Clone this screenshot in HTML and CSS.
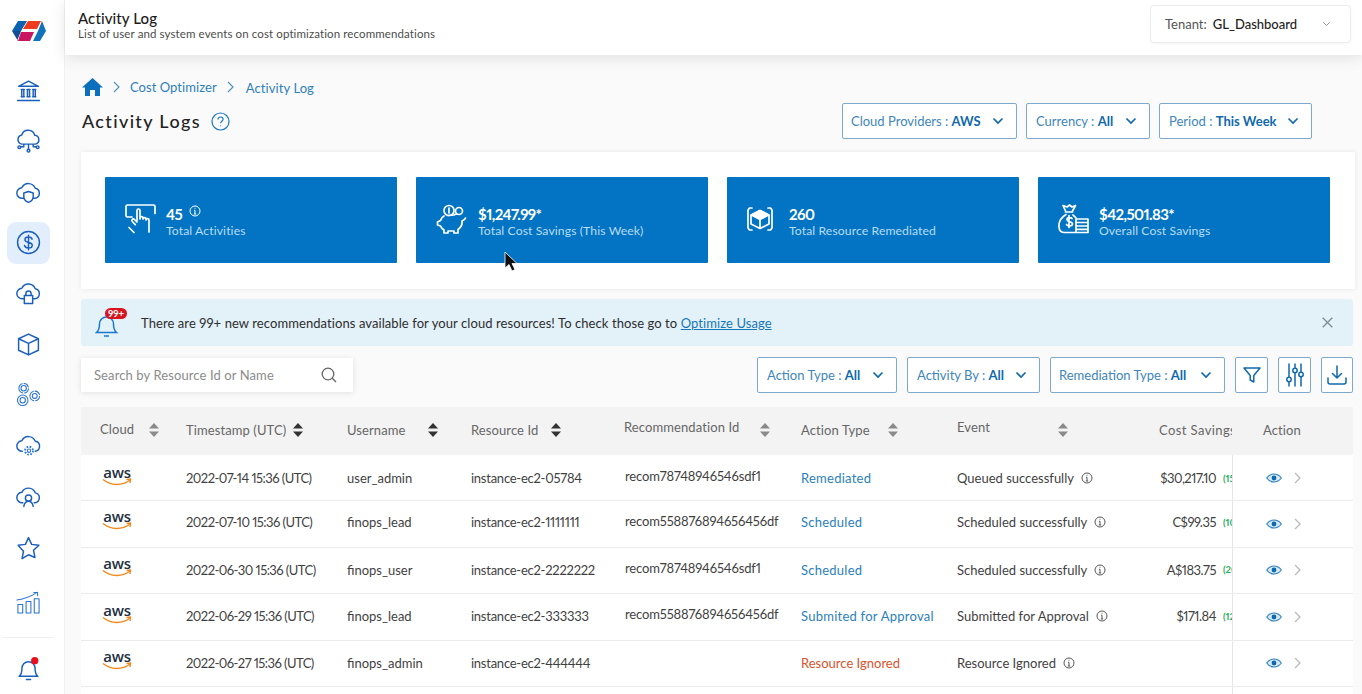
FILE: index.html
```html
<!DOCTYPE html>
<html lang="en">
<head>
<meta charset="utf-8">
<title>Activity Log</title>
<link rel="stylesheet" href="styles.css">
</head>
<body>
<svg class="defs" width="0" height="0" aria-hidden="true">
  <symbol id="down" viewBox="0 0 12 8"><path d="M1.500 1.500 6 6l4.500-4.500"/></symbol>
  <symbol id="sort" viewBox="0 0 10 14"><path d="M5 0 10 5.500H0zM5 14 0 8.500h10z"/></symbol>
  <symbol id="info" viewBox="0 0 12 12"><circle cx="6" cy="6" r="5"/><path d="M6 5.300V9M4.800 9h2.400M5 5.300h1M6 2.800v.9"/></symbol>
  <symbol id="eye" viewBox="0 0 16 10"><path class="eye-line" d="M.7 5C4.500-.3 11.500-.3 15.300 5 11.500 10.300 4.500 10.300.7 5z"/><circle class="eye-dot" cx="8" cy="5" r="2.400"/></symbol>
  <symbol id="next" viewBox="0 0 7 12"><path d="M1 1l5 5-5 5"/></symbol>
  <symbol id="aws" viewBox="0 0 30 10"><path d="M1 1.500C9 8 20 8 28 2"/><path d="M24.500 1.500 28.500 1 28 5"/></symbol>
</svg>

<div class="app">
  <nav class="rail">
    <svg class="logo" viewBox="0 0 34 22" width="34" height="22">
      <polygon points="0,11 6,1 15,1 9,11" fill="#0b62b0"/>
      <polygon points="0,11 9,11 5,21 6,21" fill="#0d4e95"/>
      <polygon points="16,1 29,1 25,9 11,9" fill="#ec3b1e"/>
      <polygon points="30,1 34,11 28,21 21,21 26,11" fill="#0f72bd"/>
      <polygon points="9,12 22,12 18,21 6,21" fill="#c8175f"/>
    </svg>
    <a class="rail-item"><svg class="ri" viewBox="0 0 24 24"><path d="M2.500 8 12 3l9.500 5zM5.500 11v7M7.500 11v7M11 11v7M13 11v7M16.500 11v7M18.500 11v7M5 11h3M10.500 11h3M16 11h3M5 18h3M10.500 18h3M16 18h3M1.500 21.500h21"/></svg></a>
    <a class="rail-item"><svg class="ri" viewBox="0 0 24 24"><path d="M5.500 14.500A4.500 4.500 0 0 1 5.500 5.700 6.500 6.500 0 0 1 18 6a4.300 4.300 0 0 1 .5 8.500zM12 14.500v5M7.500 14.500v2.500H4.500M16.500 14.500v2.500H19.500"/><circle cx="3.200" cy="17.500" r="1.300"/><circle cx="12" cy="20.800" r="1.300"/><circle cx="20.800" cy="17.500" r="1.300"/></svg></a>
    <a class="rail-item"><svg class="ri" viewBox="0 0 24 24"><path d="M7 17.500H6a5 5 0 0 1-.4-10A7 7 0 0 1 18.500 8a4.800 4.800 0 0 1-.5 9.500h-1M7.500 12.500 12 11l4.500 1.500V16c0 2.700-2 4.500-4.500 5.500-2.500-1-4.500-2.800-4.500-5.500z"/></svg></a>
    <a class="rail-item active"><svg class="ri" viewBox="0 0 24 24"><circle cx="12" cy="12" r="10.500"/><path d="M15.500 8.800C15 7.200 13.500 6.800 12 6.800c-1.800 0-3.400.9-3.400 2.600 0 3.600 7 1.600 7 5.200 0 1.800-1.700 2.700-3.600 2.700-1.700 0-3.300-.7-3.800-2.400M12 5v14"/></svg></a>
    <a class="rail-item"><svg class="ri" viewBox="0 0 24 24"><path d="M7 17H6a5 5 0 0 1-.4-10A7 7 0 0 1 18.500 7.500a4.800 4.800 0 0 1-.5 9.500h-1M8 14h8v7.500H8zM9.500 14v-2a2.500 2.500 0 0 1 5 0v2"/></svg></a>
    <a class="rail-item"><svg class="ri" viewBox="0 0 24 24"><path d="M12 2 21.500 6.500v11L12 22l-9.500-4.500v-11zM2.500 6.500 12 11l9.500-4.500M12 11v11"/></svg></a>
    <a class="rail-item"><svg class="ri thin" viewBox="0 0 26 26"><path class="dash2" d="M3 6.500a5 5 0 0 1 10 0 5 5 0 0 1-10 0z"/><circle cx="8" cy="6.500" r="2.800"/><circle cx="7" cy="19" r="5.500"/><circle cx="7" cy="19" r="2.800"/><path class="dash2" d="M14.500 14.500a5 5 0 0 1 10 0 5 5 0 0 1-10 0z"/><circle cx="19.500" cy="14.500" r="2.500"/></svg></a>
    <a class="rail-item"><svg class="ri" viewBox="0 0 24 24"><path d="M6 17.500A5 5 0 0 1 5.600 7.500 7 7 0 0 1 18.500 8 4.800 4.800 0 0 1 18.500 17.500"/><circle class="gear-in" cx="12.500" cy="17" r="1.600"/><circle class="dash" cx="12.500" cy="17" r="3.800"/></svg></a>
    <a class="rail-item"><svg class="ri" viewBox="0 0 24 24"><path d="M6.500 18H6a5 5 0 0 1-.4-10A7 7 0 0 1 18.500 8.500 4.800 4.800 0 0 1 18 18h-.5M7.500 21.500c.5-3 2.200-5 4.500-5s4 2 4.500 5"/><circle cx="12" cy="13.500" r="3"/></svg></a>
    <a class="rail-item"><svg class="ri" viewBox="0 0 24 24"><path d="M12 2.500 15 9l7 .8-5.200 4.800 1.400 7L12 19l-6.200 3.600 1.400-7L2 9.800 9 9z"/></svg></a>
    <a class="rail-item bars"><svg class="ri thin" viewBox="0 0 26 24"><path d="M2 14h5v9H2zM10.500 11h5v12h-5zM19 8h5v15h-5zM1 9.500C8 8.500 15 6 22 1.500M18.500 1.500H22.500V5"/></svg></a>
    <div class="rail-rule"></div>
    <a class="rail-item bell"><svg class="ri" viewBox="0 0 24 24"><path d="M3 19.500c2.500-2 2.700-4.500 2.700-7.500 0-3.500 2.500-6.500 6.300-6.500s6.300 3 6.300 6.500c0 3 .2 5.500 2.700 7.500zM10 22.500h4"/><circle class="red" cx="18" cy="4.500" r="3.500"/></svg></a>
  </nav>

  <div class="main">
    <header class="topbar">
      <div class="topbar-text">
        <div class="topbar-title">Activity Log</div>
        <div class="topbar-sub">List of user and system events on cost optimization recommendations</div>
      </div>
      <div class="tenant">
        <span class="tenant-label">Tenant:</span>
        <b>GL_Dashboard</b>
        <svg class="chev-grey" width="9" height="6"><use href="#down"/></svg>
      </div>
    </header>

    <div class="content">
      <div class="crumbs">
        <svg class="home" width="21" height="18" viewBox="0 0 21 18"><path d="M10.500 0 21 9.500h-3V18h-5v-6H8v6H3V9.500H0z"/></svg>
        <svg class="crumb-sep" width="7" height="12"><use href="#next"/></svg>
        <span class="crumb-a">Cost Optimizer</span>
        <svg class="crumb-sep" width="7" height="12"><use href="#next"/></svg>
        <span class="crumb-b">Activity Log</span>
      </div>

      <div class="title-row">
        <h1>Activity Logs</h1>
        <svg class="help" width="19" height="19" viewBox="0 0 19 19"><circle cx="9.500" cy="9.500" r="8.500"/><path d="M7 7.500c0-1.500 1.100-2.500 2.600-2.500s2.500 1 2.500 2.300c0 2-2.500 2-2.500 4M9.600 13.500v.8"/></svg>
        <div class="filters">
          <button class="fbtn w-cloud">Cloud Providers :&nbsp;<b>AWS</b><svg class="chev" width="12" height="8"><use href="#down"/></svg></button>
          <button class="fbtn w-cur">Currency :&nbsp;<b>All</b><svg class="chev" width="12" height="8"><use href="#down"/></svg></button>
          <button class="fbtn w-per">Period :&nbsp;<b>This Week</b><svg class="chev" width="12" height="8"><use href="#down"/></svg></button>
        </div>
      </div>

      <section class="panel">
        <div class="stat">
          <svg class="stat-ico" width="31" height="30" viewBox="0 0 31 30"><path d="M7 13H2.500C1.500 13 1 12.500 1 11.500v-9C1 1.500 1.500 1 2.500 1h26c1 0 1.500.5 1.500 1.500v7"/><path d="M12 17V6.500c0-2 3-2 3 0V15l0-1c0-1.800 3-1.800 3 0v1c0-1.800 3-1.800 3 0v1c0-1.800 3-1.800 3 0v12M12 18l-2.500-2.500c-1.500-1.500-3.500.5-2.200 2l3 3.200M4 23.500l5 5"/></svg>
          <div><div class="stat-n">45 <svg class="stat-i" width="12" height="12"><use href="#info"/></svg></div><div class="stat-l">Total Activities</div></div>
        </div>
        <div class="stat">
          <svg class="stat-ico" width="31" height="30" viewBox="0 0 31 30"><circle cx="13" cy="6.500" r="5"/><path d="M13 4v5M8 12c-2 1-3 3-3.500 4.500L1.500 18v3l3 1c.5 1.500 2 3 3.500 4v3h4v-2h6v2h4v-3.500c3-2 4.500-5 4-8.500 1.500-.5 3-1 3.500-3M21 10a5 5 0 0 0-3 1c-2 0-4 .1-6 .5"/><circle cx="23" cy="7" r="3.500"/></svg>
          <div class="stat-gap"><div class="stat-n">$1,247.99*</div><div class="stat-l">Total Cost Savings (This Week)</div></div>
        </div>
        <div class="stat">
          <svg class="stat-ico small" width="26" height="24" viewBox="0 0 26 24"><path class="solid" d="M13 3.500 21.500 8 13 12.500 4.500 8z"/><path d="M13 3.500 22 8v9l-9 4.500L4 17V8zM13 12.500V21.500"/><path d="M5 1H2.500L1 3v18l1.500 2H5M21 1h2.500L25 3v18l-1.500 2H21"/></svg>
          <div class="stat-gap2"><div class="stat-n">260</div><div class="stat-l">Total Resource Remediated</div></div>
        </div>
        <div class="stat">
          <svg class="stat-ico" width="31" height="30" viewBox="0 0 31 30"><path d="M8 8 5 1.500 9 3l2.500-2L14 3l3.500-1.500L14 8zM7.500 8h7M8 10.500C3 13.500.5 18 1 23c.2 3 2 5.500 5.500 5.500H17M15 11c1 .8 2 1.800 3 3"/><path d="M14 14.500c-1-1.300-5-1.300-5 1 0 3 5.500 1.500 5.500 4.500 0 2.400-5.200 2.300-6 .5M11 11.500v12M18 15h12v3.500H18zM18 18.500h12V22H18zM18 22h12v3.300H18zM18 25.300h12v3.200H18z"/></svg>
          <div><div class="stat-n">$42,501.83*</div><div class="stat-l">Overall Cost Savings</div></div>
        </div>
      </section>

      <div class="banner">
        <div class="banner-bell">
          <svg width="24" height="26" viewBox="0 0 24 26"><path d="M1.500 20.500c2.500-2 3-5 3-8.500 0-4 3-7 7-7s7 3 7 7c0 3.500.5 6.500 3 8.500zM9 24h5"/></svg>
          <span class="badge">99+</span>
        </div>
        <p>There are 99+ new recommendations available for your cloud resources! To check those go to <a>Optimize Usage</a></p>
        <svg class="close" width="11" height="11" viewBox="0 0 11 11"><path d="M.7.7l9.600 9.600M10.300.7.700 10.300"/></svg>
      </div>

      <div class="tools">
        <div class="search">
          <span>Search by Resource Id or Name</span>
          <svg width="16" height="16" viewBox="0 0 16 16"><circle cx="7" cy="7" r="5.800"/><path d="M11.300 11.300 15 15"/></svg>
        </div>
        <div class="tools-right">
          <button class="fbtn w-act">Action Type :&nbsp;<b>All</b><svg class="chev" width="12" height="8"><use href="#down"/></svg></button>
          <button class="fbtn w-by">Activity By :&nbsp;<b>All</b><svg class="chev" width="12" height="8"><use href="#down"/></svg></button>
          <button class="fbtn w-rem">Remediation Type :&nbsp;<b>All</b><svg class="chev" width="12" height="8"><use href="#down"/></svg></button>
          <button class="ibtn"><svg width="18" height="18" viewBox="0 0 18 18"><path d="M1 2h16l-6.200 7.500V16l-3.600-2V9.500z"/></svg></button>
          <button class="ibtn"><svg width="18" height="24" viewBox="0 0 18 24"><path d="M3 1v13M3 19v4M9 1v4M9 10v13M15 1v8M15 14v9"/><circle cx="3" cy="16.500" r="2.200"/><circle cx="9" cy="7.500" r="2.200"/><circle cx="15" cy="11.500" r="2.200"/></svg></button>
          <button class="ibtn last"><svg width="20" height="20" viewBox="0 0 20 20"><path d="M10 1v12M5.500 8.500 10 13l4.500-4.500M1 13v4c0 1 .7 2 2 2h14c1.300 0 2-1 2-2v-4"/></svg></button>
        </div>
      </div>

      <section class="table">
        <div class="row head">
          <div class="th"><span class="up1">Cloud</span><svg class="sort s1" width="10" height="14"><use href="#sort"/></svg></div>
          <div class="th"><span>Timestamp (UTC)</span><svg class="sort dark s2" width="10" height="14"><use href="#sort"/></svg></div>
          <div class="th"><span>Username</span><svg class="sort dark s3" width="10" height="14"><use href="#sort"/></svg></div>
          <div class="th"><span>Resource Id</span><svg class="sort dark s4" width="10" height="14"><use href="#sort"/></svg></div>
          <div class="th"><span class="up2">Recommendation Id</span><svg class="sort s5" width="10" height="14"><use href="#sort"/></svg></div>
          <div class="th"><span>Action Type</span><svg class="sort s6" width="10" height="14"><use href="#sort"/></svg></div>
          <div class="th"><span class="up2">Event</span><svg class="sort s7" width="10" height="14"><use href="#sort"/></svg></div>
          <div class="th clip"><span>Cost Savings</span></div>
          <div class="th act"><span>Action</span></div>
        </div>

        <div class="row r-low">
          <div class="td"><div class="aws"><span>aws</span><svg width="30" height="10"><use href="#aws"/></svg></div></div>
          <div class="td date">2022-07-14 15:36 (UTC)</div>
          <div class="td">user_admin</div>
          <div class="td res">instance-ec2-05784</div>
          <div class="td rec up">recom78748946546sdf1</div>
          <div class="td link">Remediated</div>
          <div class="td">Queued successfully<svg class="i" width="12" height="12"><use href="#info"/></svg></div>
          <div class="td cost"><span>$30,217.10</span><b>(15%)</b></div>
          <div class="td act"><svg class="e" width="16" height="10"><use href="#eye"/></svg><svg class="n" width="7" height="12"><use href="#next"/></svg></div>
        </div>
        <div class="row r-high">
          <div class="td"><div class="aws"><span>aws</span><svg width="30" height="10"><use href="#aws"/></svg></div></div>
          <div class="td date">2022-07-10 15:36 (UTC)</div>
          <div class="td">finops_lead</div>
          <div class="td res">instance-ec2-1111111</div>
          <div class="td rec up">recom558876894656456df</div>
          <div class="td link">Scheduled</div>
          <div class="td">Scheduled successfully<svg class="i" width="12" height="12"><use href="#info"/></svg></div>
          <div class="td cost"><span>C$99.35</span><b>(10%)</b></div>
          <div class="td act"><svg class="e" width="16" height="10"><use href="#eye"/></svg><svg class="n" width="7" height="12"><use href="#next"/></svg></div>
        </div>
        <div class="row">
          <div class="td"><div class="aws"><span>aws</span><svg width="30" height="10"><use href="#aws"/></svg></div></div>
          <div class="td date">2022-06-30 15:36 (UTC)</div>
          <div class="td">finops_user</div>
          <div class="td res">instance-ec2-2222222</div>
          <div class="td rec up">recom78748946546sdf1</div>
          <div class="td link">Scheduled</div>
          <div class="td">Scheduled successfully<svg class="i" width="12" height="12"><use href="#info"/></svg></div>
          <div class="td cost"><span>A$183.75</span><b>(20%)</b></div>
          <div class="td act"><svg class="e" width="16" height="10"><use href="#eye"/></svg><svg class="n" width="7" height="12"><use href="#next"/></svg></div>
        </div>
        <div class="row">
          <div class="td"><div class="aws"><span>aws</span><svg width="30" height="10"><use href="#aws"/></svg></div></div>
          <div class="td date">2022-06-29 15:36 (UTC)</div>
          <div class="td">finops_lead</div>
          <div class="td res">instance-ec2-333333</div>
          <div class="td rec up">recom558876894656456df</div>
          <div class="td link">Submited for Approval</div>
          <div class="td">Submitted for Approval<svg class="i" width="12" height="12"><use href="#info"/></svg></div>
          <div class="td cost"><span>$171.84</span><b>(12%)</b></div>
          <div class="td act"><svg class="e" width="16" height="10"><use href="#eye"/></svg><svg class="n" width="7" height="12"><use href="#next"/></svg></div>
        </div>
        <div class="row">
          <div class="td"><div class="aws"><span>aws</span><svg width="30" height="10"><use href="#aws"/></svg></div></div>
          <div class="td date">2022-06-27 15:36 (UTC)</div>
          <div class="td">finops_admin</div>
          <div class="td res">instance-ec2-444444</div>
          <div class="td up"></div>
          <div class="td ignored">Resource Ignored</div>
          <div class="td">Resource Ignored<svg class="i" width="12" height="12"><use href="#info"/></svg></div>
          <div class="td cost"></div>
          <div class="td act"><svg class="e" width="16" height="10"><use href="#eye"/></svg><svg class="n" width="7" height="12"><use href="#next"/></svg></div>
        </div>
        <div class="row">
          <div class="td"></div><div class="td"></div><div class="td"></div><div class="td"></div><div class="td"></div><div class="td"></div><div class="td"></div><div class="td"></div><div class="td act"></div>
        </div>
      </section>
    </div>
  </div>
</div>

<svg class="cursor" width="14" height="22" viewBox="0 0 14 22"><path d="M1 1v16l4-3.500L8 20l3-1.500-3-6h5z"/></svg>
</body>
</html>
```
FILE: styles.css
```css
* { box-sizing: border-box; }
html, body { margin: 0; height: 100%; overflow: hidden; }
body { font-family: "Lato", "Open Sans", sans-serif; background: #fafafa; color: #3d3d3d; font-size: 13px; letter-spacing: .1px; font-variant-numeric: proportional-nums; }
.defs { position: absolute; }
.app { display: flex; height: 694px; overflow: hidden; }

/* rail */
.rail { width: 65px; flex: none; background: #fff; display: flex; flex-direction: column; align-items: center; padding: 20px 8px 0 0; border-right: 1px solid #f1f1f1; }
.logo { flex: none; margin: 0 0 0 1px; display: block; }
.rail-item { width: 43px; height: 50.700px; flex: none; display: flex; align-items: center; justify-content: center; margin-left: 1px; position: relative; }
.logo + .rail-item { margin-top: 23.500px; }
.rail-item.active::before { content: ""; position: absolute; left: 0; right: 0; top: 4px; bottom: 4px; background: #e3eefc; border-radius: 9px; }
.rail-item.bars { margin-top: 5px; }
.ri { width: 25px; height: 25px; fill: none; stroke: #1a5fbb; stroke-width: 1.400; stroke-linejoin: round; stroke-linecap: round; position: relative; }
.ri.thin { stroke-width: 1.100; stroke: #2a73d2; }
.dash { stroke-dasharray: 1.600 1.400; stroke-width: 1.800; stroke-linecap: butt; stroke: #2a73d2; }
.dash2 { stroke-dasharray: 6 2; }
.gear-in { stroke: #2a73d2; stroke-width: 1; }
.red { fill: #e8101c; stroke: none; }
.rail-rule { width: 50px; height: 1px; background: #eeeeee; margin-top: 9px; flex: none; }
.rail-item.bell { height: 60px; }

/* top bar */
.main { flex: 1; min-width: 0; display: flex; flex-direction: column; }
.topbar { height: 55px; flex: none; background: #fff; box-shadow: 0 3px 14px rgba(0,0,0,.1); display: flex; align-items: center; justify-content: space-between; padding: 0 11px 0 13px; position: relative; }
.topbar-title { font-size: 15px; font-weight: 500; color: #1d1d1d; line-height: 18px; margin-top: -7px; }
.topbar-sub { font-size: 11.500px; color: #4c4c4c; line-height: 13px; letter-spacing: .11px; }
.tenant { width: 201px; height: 38px; border: 1px solid #ececec; border-radius: 4px; background: #fff; display: flex; align-items: center; padding: 0 19px 0 14px; font-size: 13px; margin-top: -7px; box-shadow: 0 1px 3px rgba(0,0,0,.04); letter-spacing: 0; }
.tenant-label { color: #555; margin-right: 6px; }
.tenant b { font-weight: 500; color: #222; }
.chev-grey { margin-left: auto; fill: none; stroke: #999; stroke-width: 1.300; }

/* content */
.content { padding: 22px 9px 0 16px; flex: 1; min-height: 0; }
.crumbs { display: flex; align-items: center; height: 20px; margin-left: 1px; font-size: 13px; color: #2f7fbb; letter-spacing: .05px; }
.home { fill: #0b6fbe; }
.crumb-sep { fill: none; stroke: #4d8fc2; stroke-width: 1.100; margin: 0 10px; }
.crumb-b { margin: 1px 0 0 2px; letter-spacing: .1px; }
.title-row { display: flex; align-items: center; margin-top: 6px; height: 36px; }
h1 { margin: 0 0 0 1px; font-size: 18px; font-weight: 500; color: #222; letter-spacing: 1.350px; }
.help { fill: none; stroke: #1b78bd; stroke-width: 1.200; margin-left: 10px; }
.filters { margin-left: auto; margin-right: 41px; display: flex; gap: 9px; }
.fbtn { height: 36px; background: #fff; border: 1px solid #7ea9cf; border-radius: 2px; color: #4086bb; font: inherit; letter-spacing: 0; display: flex; align-items: center; padding: 0 12px 0 9px; }
.fbtn b { color: #0f69ad; font-weight: 700; letter-spacing: 0; }
.chev { margin-left: auto; fill: none; stroke: #0f69ad; stroke-width: 1.700; }
.w-cloud { width: 175px; padding-left: 8px; }
.w-cur { width: 124px; }
.w-per { width: 153px; }
.w-act { width: 140px; }
.w-by { width: 133px; }
.w-rem { width: 175px; padding-left: 8px; }

/* stats */
.panel { margin-top: 13px; margin-right: -2px; height: 137px; background: #fff; box-shadow: 0 0 5px rgba(0,0,0,.08); display: grid; grid-template-columns: repeat(4, 292px); gap: 19px; padding: 25px 24px 26px; }
.stat { background: #0274c3; border-radius: 1px; display: flex; align-items: center; padding: 0 0 0 20px; color: #fff; }
.stat > div { padding-top: 3px; }
.stat-ico { flex: none; fill: none; stroke: #fff; stroke-width: 1.700; stroke-linejoin: round; stroke-linecap: round; margin-right: 10px; margin-top: -2px; }
.stat-ico .solid { fill: #fff; }
.stat-ico.small { margin-right: 16px; }
.stat-gap { margin-left: 1px; }
.stat-n { font-size: 15px; font-weight: 700; line-height: 17px; letter-spacing: -.6px; display: flex; align-items: flex-start; gap: 7px; }
.stat-i { fill: none; stroke: #fff; stroke-width: 1; margin-top: -1px; }
.stat-l { font-size: 12.200px; color: #b9dcf3; line-height: 15px; letter-spacing: .1px; }

/* banner */
.banner { margin-top: 10px; height: 47px; background: #e3f1f9; border-radius: 3px; display: flex; align-items: center; padding: 0 20px 0 14px; }
.banner-bell { width: 46px; height: 30px; position: relative; flex: none; }
.banner-bell svg { fill: none; stroke: #1b78d0; stroke-width: 1.500; position: absolute; left: 0; top: 4px; }
.badge { position: absolute; left: 10px; top: 0; background: #d9141f; color: #fff; font-size: 9.500px; font-weight: 700; line-height: 11px; padding: 0 3px; border-radius: 6px; letter-spacing: 0; }
.banner p { margin: 0; color: #2d2d2d; font-size: 13px; letter-spacing: .08px; }
.banner a { color: #1678ba; text-decoration: underline; }
.close { margin-left: auto; fill: none; stroke: #7c8a93; stroke-width: 1.300; }

/* tools */
.tools { display: flex; align-items: center; justify-content: space-between; margin-top: 11px; height: 36px; }
.search { width: 272px; height: 34px; background: #fff; box-shadow: 0 1px 6px rgba(0,0,0,.1); display: flex; align-items: center; justify-content: space-between; padding: 0 16px 0 13px; color: #8b8b8b; }
.search svg { fill: none; stroke: #666; stroke-width: 1.300; }
.tools-right { display: flex; gap: 10px; }
.ibtn { width: 33px; height: 36px; background: #fff; border: 1px solid #7ea9cf; border-radius: 2px; display: flex; align-items: center; justify-content: center; padding: 0; }
.ibtn.last { width: 32px; }
.ibtn svg { fill: none; stroke: #0f69ad; stroke-width: 1.500; stroke-linejoin: round; stroke-linecap: round; }

/* table */
.table { margin-top: 14px; overflow: hidden; }
.row { display: grid; grid-template-columns: 105px 161px 124px 153px 177px 156px 183px 92px 120px; height: 46.400px; background: #fff; border-bottom: 1px solid #ebebeb; }
.row.head { height: 48px; background: #f3f3f3; border: 0; }
.th { display: flex; align-items: center; color: #666; white-space: nowrap; min-width: 0; padding-bottom: 2px; }
.th:first-child { padding-left: 19px; }
.up1 { margin-top: -2px; }
.up2 { margin-top: -6px; }
.sort { fill: #8a8a8a; flex: none; }
.sort.dark { fill: #333; }
.s1 { margin-left: 15px; }
.s2 { margin-left: 7px; }
.s3 { margin-left: 22px; }
.s4 { margin-left: 13px; }
.s5 { margin-left: 21px; }
.s6 { margin-left: 18px; }
.s7 { margin-left: 68px; }
.clip { padding-left: 19px; overflow: hidden; }
.th.clip span { overflow: hidden; letter-spacing: .4px; }
.th.act { padding-left: 31px; }
.td { display: flex; align-items: center; color: #3f3f3f; white-space: nowrap; min-width: 0; letter-spacing: 0; padding-bottom: 1px; }
.td.up { padding-bottom: 5px; }
.date { letter-spacing: -.55px; }
.res { letter-spacing: -.25px; }
.rec { letter-spacing: -.15px; padding-left: 1px; }
.r-low .td { padding-top: 1px; padding-bottom: 0; }
.r-low .td.up { padding-top: 0; padding-bottom: 3px; }
.r-high .td { padding-bottom: 4px; }
.r-high .td.up { padding-bottom: 7px; }
.row .td.act { padding-top: 0; padding-bottom: 0; }
.link { color: #2b80bc; letter-spacing: .25px; }
.ignored { color: #d9532c; }
.i { fill: none; stroke: #555; stroke-width: 1; margin-left: 7px; flex: none; }
.cost { justify-content: flex-end; overflow: hidden; }
.cost span { margin-right: 7px; letter-spacing: -.5px; }
.cost b { width: 9px; overflow: hidden; color: #1fae5c; font-size: 9.500px; flex: none; }
.td.act { border-left: 1px solid #e6e6e6; padding-left: 33px; }
.e { flex: none; }
.eye-line { fill: #d8e9f6; stroke: #2b80bc; stroke-width: 1.100; }
.eye-dot { fill: #0f69ad; }
.n { fill: none; stroke: #bbb; stroke-width: 1.300; margin-left: 12px; flex: none; }
.aws { margin-left: 21px; width: 30px; display: flex; flex-direction: column; align-items: center; margin-top: -3px; }
.aws span { font-family: "Open Sans", sans-serif; font-size: 15px; font-weight: 600; color: #232f3e; line-height: 12px; letter-spacing: -.2px; }
.aws svg { fill: none; stroke: #f08a1d; stroke-width: 1.400; display: block; margin-top: 0; }

.cursor { position: absolute; left: 504px; top: 251px; fill: #111; stroke: #fff; stroke-width: .8; }
```
